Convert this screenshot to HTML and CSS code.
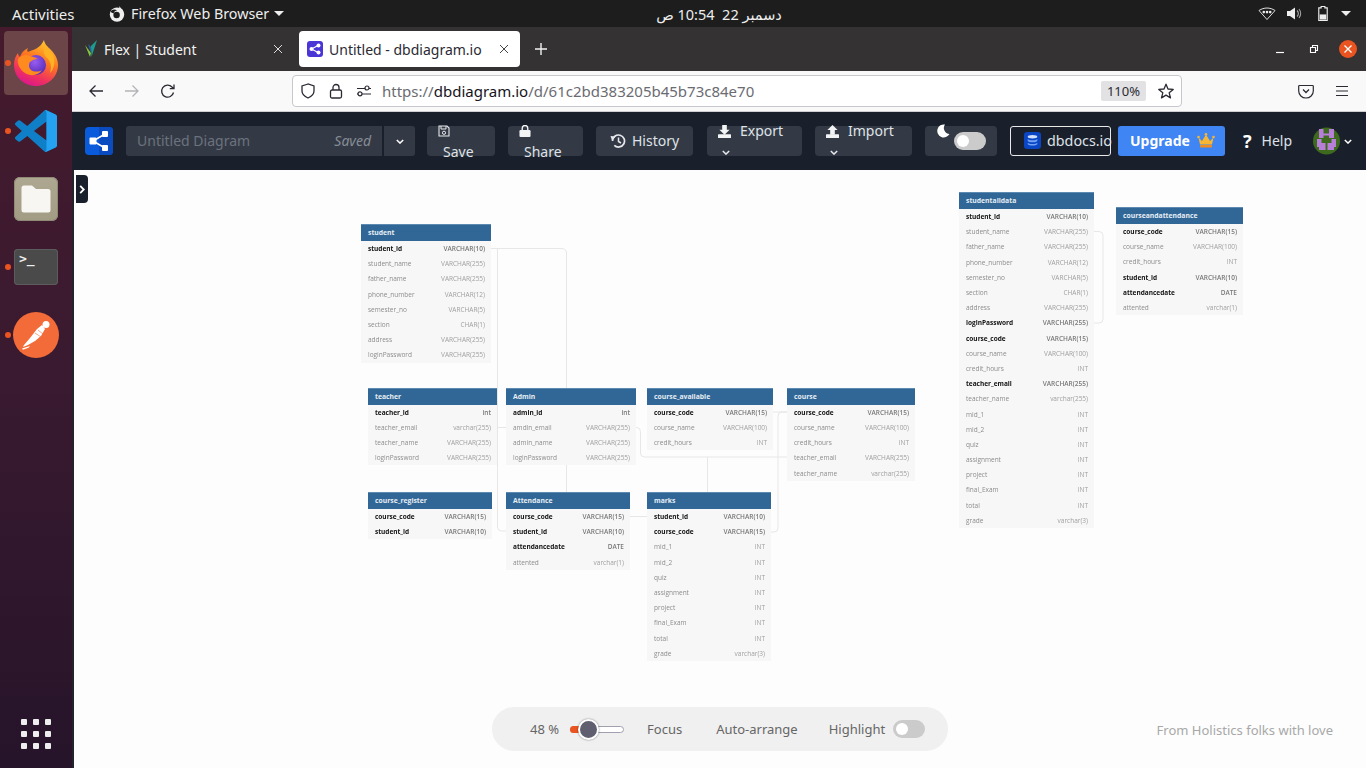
FILE: index.html
```html
<!DOCTYPE html>
<html lang="en">
<head>
<meta charset="utf-8">
<title>Untitled - dbdiagram.io</title>
<link rel="stylesheet" href="styles.css">
</head>
<body>
<header class="topbar">
  <div class="top-left">
    <span class="activities">Activities</span>
    <span class="app-menu">
      <svg class="ff-mono" viewBox="0 0 16 16"><circle cx="8" cy="8.6" r="7.2" fill="#eee"/><circle cx="7.6" cy="9" r="3.2" fill="#1d1d1d"/><path d="M1.5 6C3 3 6 3 8 4.5 6.5 4.6 5 5.5 4.6 7.5Z" fill="#1d1d1d"/><path d="M10.5 0c.4 2 3 3 4 5.5L10 4Z" fill="#eee"/></svg>
      Firefox Web Browser <i class="caret"></i>
    </span>
  </div>
  <div class="clock" dir="rtl">دسمبر 22&nbsp;&nbsp;10:54 ص</div>
  <div class="tray">
    <svg class="tray-i" viewBox="0 0 18 14"><path d="M1 4C6 .7 12 .7 17 4L9 13Z" fill="none" stroke="#ddd" stroke-width="1"/><circle cx="5.8" cy="5.6" r="1.3" fill="#eee"/><circle cx="9" cy="5.6" r="1.3" fill="#eee"/><circle cx="12.2" cy="5.6" r="1.3" fill="#eee"/></svg>
    <svg class="tray-i" viewBox="0 0 18 14"><path d="M1 4.500h3L9 1v12L4 9.500H1Z" fill="#eee"/><path d="M11 4a4 4 0 0 1 0 6M13 2.500a7 7 0 0 1 0 9" fill="none" stroke="#aaa" stroke-width="1.100"/></svg>
    <svg class="tray-i" viewBox="0 0 18 16"><path d="M7 .5h4v1.500h2.500v13.500h-9V2H7Z" fill="none" stroke="#eee" stroke-width="1.200"/><rect x="5.500" y="9" width="7" height="5.500" fill="#eee"/></svg>
    <i class="caret tray-caret"></i>
  </div>
</header>

<div class="desktop">
  <aside class="dock">
    <div class="dock-item tile-active">
      <i class="dot"></i>
      <svg class="ic-ff" viewBox="0 0 46 46">
        <defs>
          <linearGradient id="ffBody" x1=".75" y1="0" x2=".3" y2="1"><stop offset="0" stop-color="#ffd02e"/><stop offset=".4" stop-color="#ff7a1f"/><stop offset=".75" stop-color="#f0325e"/><stop offset="1" stop-color="#d9158f"/></linearGradient>
          <radialGradient id="ffCore" cx=".45" cy=".35" r=".7"><stop offset="0" stop-color="#9a5cf0"/><stop offset="1" stop-color="#4f2ab8"/></radialGradient>
        </defs>
        <path d="M31 0c.5 4 4 7 7 10 4 4 7 9 7 15 0 12-10 21-22 21S1 37 1 25c0-5 1.500-9 4-12 .2 2 1 3 2 4 1-4 4-7 8-9-1 2-1 3 0 4 4-2 12-3 16-12Z" fill="url(#ffBody)"/>
        <circle cx="23" cy="25" r="10" fill="url(#ffCore)"/>
        <path d="M5 19c3-4 8-5 12-3 4 1 6 2 8 3-4 0-5 1-8 3-1 1-2 5 1 8 3 2 8 2 11 0-3 5-11 7-17 3-5-3-8-9-7-14Z" fill="#ff8a1e"/>
        <path d="M31 3c1 5 8 8 10 15 1 5 0 11-4 15 2-6 1-12-4-16-2-2-3-8-2-14Z" fill="#ffb224"/>
      </svg>
    </div>
    <div class="dock-item">
      <i class="dot"></i>
      <svg class="ic-vs" viewBox="0 0 100 100"><path d="M96.500 10.800 75.900.9a6.200 6.200 0 0 0-7.100 1.200L29.300 38.100 12.100 25.100a4.200 4.200 0 0 0-5.300.2L1.400 30.300a4.200 4.200 0 0 0 0 6.200L16.300 50 1.400 63.500a4.200 4.200 0 0 0 0 6.200l5.500 5a4.200 4.200 0 0 0 5.300.2l17.100-13 39.500 36a6.200 6.200 0 0 0 7.100 1.200l20.600-9.900a6.200 6.200 0 0 0 3.500-5.600V16.400a6.200 6.200 0 0 0-3.500-5.600ZM75 72.700 45.100 50 75 27.300Z" fill="#0f80c8"/><path d="M71 99.300a6 6 0 0 0 4.900-.4l20.600-9.900a6.200 6.200 0 0 0 3.500-5.600V16.400a6.200 6.200 0 0 0-3.500-5.600L75.900.9A6 6 0 0 0 71 .7C73.500 2 75 4 75 7v86c0 3-1.500 5-4 6.300Z" fill="#25a3f2"/></svg>
    </div>
    <div class="dock-item">
      <div class="ic-files"><svg viewBox="0 0 32 28"><path d="M1.500 3a2.500 2.500 0 0 1 2.500-2.500h8l4 3.500h12a2.500 2.500 0 0 1 2.500 2.500V25a2.500 2.500 0 0 1-2.500 2.500H4A2.500 2.500 0 0 1 1.500 25Z" fill="#f8f6f2"/></svg></div>
    </div>
    <div class="dock-item">
      <i class="dot"></i>
      <div class="ic-term"><span>&gt;_</span></div>
    </div>
    <div class="dock-item">
      <i class="dot"></i>
      <svg class="ic-post" viewBox="0 0 46 46"><circle cx="23" cy="23" r="23" fill="#f26b38"/><g fill="#fff"><circle cx="33" cy="12.500" r="3.500"/><path d="M29 13 24 17l-7 9-6 7-1 2 5-2 7-4 6-5 4-7Z"/><path d="M9 36.500l8-2.500-1.500 1.800-5.500 2Z"/></g><path d="M22 21l6 4M25 18l5 4" stroke="#f26b38" stroke-width=".6"/></svg>
    </div>
    <div class="dock-grid">
      <i></i><i></i><i></i><i></i><i></i><i></i><i></i><i></i><i></i>
    </div>
  </aside>

  <main class="browser">
    <div class="tabbar">
      <div class="tab">
        <svg class="tab-ic" viewBox="0 0 12 18"><path d="M0 5l5 12 1-4Z" fill="#8ac43f"/><path d="M12 0 6 6l.5 11Z" fill="#1b9e8f"/><path d="M3 4l3 9V7Z" fill="#2f5fa8"/></svg>
        <span class="tab-title">Flex | Student</span>
        <span class="tab-x">
          <svg viewBox="0 0 10 10"><path d="M1 1l8 8M9 1l-8 8" stroke="#ddd" stroke-width="1"/></svg>
        </span>
      </div>
      <div class="tab tab-on">
        <svg class="tab-ic2" viewBox="0 0 16 16"><rect width="16" height="16" rx="3" fill="#4a35d6"/><path d="M4.500 8 11 4.500M4.500 8l6.500 3.500" stroke="#fff" stroke-width="1.200"/><circle cx="4.500" cy="8" r="2" fill="#fff"/><circle cx="11.500" cy="4.500" r="2" fill="#fff"/><circle cx="11.500" cy="11.500" r="2" fill="#fff"/></svg>
        <span class="tab-title">Untitled - dbdiagram.io</span>
        <span class="tab-x">
          <svg viewBox="0 0 10 10"><path d="M1 1l8 8M9 1l-8 8" stroke="#444" stroke-width="1"/></svg>
        </span>
      </div>
      <svg class="tab-plus" viewBox="0 0 14 14"><path d="M7 1v12M1 7h12" stroke="#f2f2f2" stroke-width="1.400"/></svg>
      <div class="win-ctl">
        <svg class="wc" viewBox="0 0 12 12"><path d="M2 9.500h8" stroke="#fff" stroke-width="1.200"/></svg>
        <svg class="wc wc-max" viewBox="0 0 12 12"><path d="M2.500 4.500h5v5h-5ZM4.500 4.500V2.500h5v5h-2" fill="none" stroke="#fff" stroke-width="1.100"/></svg>
        <span class="wc-close"><svg viewBox="0 0 10 10"><path d="M1.500 1.500l7 7M8.500 1.500l-7 7" stroke="#fff" stroke-width="1.300"/></svg></span>
      </div>
    </div>

    <nav class="navbar">
      <svg class="nav-ic back" viewBox="0 0 16 16"><path d="M15 8H2M7.500 2.500 2 8l5.500 5.500" fill="none" stroke="#2b2a33" stroke-width="1.300"/></svg>
      <svg class="nav-ic fwd" viewBox="0 0 16 16"><path d="M1 8h13M8.500 2.500 14 8l-5.500 5.500" fill="none" stroke="#b4b4b8" stroke-width="1.300"/></svg>
      <svg class="nav-ic reload" viewBox="0 0 16 16"><path d="M13.500 9.500A6 6 0 1 1 12 4l1.500 1.500M14 1.500v4.200H9.800" fill="none" stroke="#2b2a33" stroke-width="1.300"/></svg>
      <div class="urlbar">
        <svg class="url-ic" viewBox="0 0 16 16"><path d="M8 1 2 3v5c0 3 2.500 5.500 6 7 3.500-1.500 6-4 6-7V3Z" fill="none" stroke="#2b2a33" stroke-width="1.300"/></svg>
        <svg class="url-ic" viewBox="0 0 16 16"><rect x="2.500" y="7" width="11" height="8" rx="1.500" fill="none" stroke="#2b2a33" stroke-width="1.300"/><path d="M5 7V4.500a3 3 0 0 1 6 0V7" fill="none" stroke="#2b2a33" stroke-width="1.300"/></svg>
        <svg class="url-ic" viewBox="0 0 16 16"><path d="M1 5.500h8M1 11h14M13 5.500h2" stroke="#2b2a33" stroke-width="1.200"/><circle cx="11" cy="5" r="2" fill="none" stroke="#2b2a33" stroke-width="1.200"/><circle cx="4" cy="10.800" r="2" fill="#fff" stroke="#2b2a33" stroke-width="1.200"/></svg>
        <span class="url-text">https://<b>dbdiagram.io</b>/d/61c2bd383205b45b73c84e70</span>
        <span class="zoom-badge">110%</span>
        <svg class="url-star" viewBox="0 0 16 16"><path d="M8 1.200 10 6l5.200.4-4 3.400 1.300 5.100L8 12.100l-4.500 2.800 1.300-5.100-4-3.400L6 6Z" fill="none" stroke="#2b2a33" stroke-width="1.300" stroke-linejoin="round"/></svg>
      </div>
      <svg class="nav-ic pocket" viewBox="0 0 16 16"><path d="M1.500 2.500h13a.8.8 0 0 1 .8.8V8a7.300 7 0 0 1-14.600 0V3.300a.8.8 0 0 1 .8-.8Z" fill="none" stroke="#2b2a33" stroke-width="1.200"/><path d="M5 6.500 8 9.500l3-3" fill="none" stroke="#2b2a33" stroke-width="1.300"/></svg>
      <svg class="nav-ic burger" viewBox="0 0 16 16"><path d="M2 3.500h12M2 8h12M2 12.500h12" stroke="#2b2a33" stroke-width="1.200"/></svg>
    </nav>

    <div class="appbar">
      <svg class="logo" viewBox="0 0 28 28"><rect width="28" height="28" rx="4" fill="#0a5bdc"/><path d="M14 0h10a4 4 0 0 1 4 4v20a4 4 0 0 1-4 4H14Z" fill="#0a4cc0"/><path d="M8 14 20 7M8 14l12 7" stroke="#fff" stroke-width="1.500"/><rect x="4.500" y="10.500" width="7" height="7" rx="1" fill="#fff"/><rect x="17" y="4" width="6" height="6" rx="1" fill="#fff"/><rect x="17" y="18" width="6" height="6" rx="1" fill="#fff"/></svg>
      <div class="title-box"><span class="title-ph">Untitled Diagram</span><em class="saved">Saved</em></div>
      <div class="title-drop"><svg class="chev" viewBox="0 0 10 6"><path d="M1 1l4 4 4-4" fill="none" stroke="#fff" stroke-width="1.800"/></svg></div>

      <div class="btn btn-save">
        <svg class="b-ic" viewBox="0 0 12 12"><path d="M1 1h8l2 2v8H1Z" fill="none" stroke="#e6e8ec" stroke-width="1.100"/><path d="M3 1v3h5V1" fill="none" stroke="#e6e8ec"/><circle cx="6" cy="7.800" r="1.600" fill="none" stroke="#e6e8ec"/></svg>
        <span class="b-low">Save</span>
      </div>
      <div class="btn btn-share">
        <svg class="b-ic" viewBox="0 0 12 13"><rect y="5.500" width="12" height="7.500" rx="1.200" fill="#f2f3f5"/><path d="M3 6V3.500a3 3 0 0 1 6 0V6" fill="none" stroke="#f2f3f5" stroke-width="1.500"/></svg>
        <span class="b-low">Share</span>
      </div>
      <div class="btn btn-hist">
        <svg class="h-ic" viewBox="0 0 16 16"><path d="M2.500 8a6 6 0 1 1 1.800 4.300" fill="none" stroke="#e6e8ec" stroke-width="1.700"/><path d="M.5 3l5 .5-3.500 4Z" fill="#e6e8ec"/><path d="M8.500 4.500V8.500l2.500 1.500" fill="none" stroke="#e6e8ec" stroke-width="1.500"/></svg>
        History
      </div>
      <div class="btn btn-export">
        <span class="b-top"><svg class="d-ic" viewBox="0 0 14 14"><path d="M4.500 0h5v5h3L7 10.500 1.500 5h3Z" fill="#f2f3f5"/><rect y="10" width="14" height="4" rx=".6" fill="#f2f3f5"/></svg>Export</span>
        <svg class="chev c-low" viewBox="0 0 10 6"><path d="M1 1l4 4 4-4" fill="none" stroke="#e6e8ec" stroke-width="1.800"/></svg>
      </div>
      <div class="btn btn-import">
        <span class="b-top"><svg class="d-ic" viewBox="0 0 14 14"><path d="M4.500 10.500h5v-5h3L7 0 1.500 5.500h3Z" fill="#f2f3f5"/><rect y="10" width="14" height="4" rx=".6" fill="#f2f3f5"/></svg>Import</span>
        <svg class="chev c-low" viewBox="0 0 10 6"><path d="M1 1l4 4 4-4" fill="none" stroke="#e6e8ec" stroke-width="1.800"/></svg>
      </div>
      <div class="btn btn-moon">
        <svg class="moon" viewBox="0 0 14 14"><path d="M9 .5A6.500 6.500 0 1 0 13.500 10 6 6 0 0 1 9 .5Z" fill="#fff"/></svg>
        <span class="toggle toggle-head"><i></i></span>
      </div>
      <div class="btn-docs">
        <svg class="db-ic" viewBox="0 0 16 16"><rect width="16" height="16" rx="3" fill="#0a46c4"/><ellipse cx="8" cy="4.500" rx="4.500" ry="1.600" fill="#cfe0ff"/><path d="M3.500 6.500c1 1.600 8 1.600 9 0v2c-1 1.600-8 1.600-9 0ZM3.500 10c1 1.600 8 1.600 9 0v1.500c-1 1.600-8 1.600-9 0Z" fill="#6fa1f5"/></svg>
        <span>dbdocs.io</span>
      </div>
      <div class="btn-up">Upgrade
        <svg class="crown" viewBox="0 0 18 15"><path d="M1.500 4.500 5 8l4-6.500L13 8l3.500-3.500L15 11.500H3Z" fill="#f7b733"/><rect x="3" y="12" width="12" height="2.500" rx=".8" fill="#f08c1e"/><circle cx="1.500" cy="4" r="1.300" fill="#f7b733"/><circle cx="9" cy="1.300" r="1.300" fill="#f7b733"/><circle cx="16.500" cy="4" r="1.300" fill="#f7b733"/></svg>
      </div>
      <div class="help"><b>?</b><span>Help</span></div>
      <svg class="avatar" viewBox="0 0 27 28"><circle cx="13.500" cy="14" r="13.500" fill="#3e6a1e"/><path d="M6 2h4.500v4.500h5.500V2H21v9h-5V8.500h-5.500V11H6ZM4 12h4.500v4h4v7H6v-3H4ZM18.500 12H23v8h-2v3h-6.500v-7h4Z" fill="#b77fd8"/></svg>
      <svg class="chev av-chev" viewBox="0 0 10 6"><path d="M1 1l4 4 4-4" fill="none" stroke="#fff" stroke-width="1.800"/></svg>
    </div>

    <section class="canvas">
      <div class="side-toggle"><svg viewBox="0 0 6 10"><path d="M1 1l4 4-4 4" fill="none" stroke="#fff" stroke-width="2"/></svg></div>

      <svg class="links" viewBox="74 170 1292 598" fill="none" stroke="#e7e7e7" stroke-width="1">
        <path d="M491 248.500H562a4.500 4.500 0 0 1 4.500 4.500V492"/>
        <path d="M497.500 248.500V527a4 4 0 0 0 4 4H506"/>
        <path d="M497 427.500h9"/>
        <path d="M636 427.500h.5a4 4 0 0 1 4 4V453a4 4 0 0 0 4 4H787"/>
        <path d="M773 412h14"/>
        <path d="M787 412h-5a4 4 0 0 0-4 4V528a4 4 0 0 1-4 4h-3"/>
        <path d="M707.500 457v35"/>
        <path d="M630 516.500h17"/>
        <path d="M1094 231.500h5a4 4 0 0 1 4 4V319a4 4 0 0 1-4 4h-5"/>
      </svg>

      <article class="tbl t-student">
        <h4>student</h4>
        <div class="row pk"><span>student_id</span><span>VARCHAR(10)</span></div>
        <div class="row"><span>student_name</span><span>VARCHAR(255)</span></div>
        <div class="row"><span>father_name</span><span>VARCHAR(255)</span></div>
        <div class="row"><span>phone_number</span><span>VARCHAR(12)</span></div>
        <div class="row"><span>semester_no</span><span>VARCHAR(5)</span></div>
        <div class="row"><span>section</span><span>CHAR(1)</span></div>
        <div class="row"><span>address</span><span>VARCHAR(255)</span></div>
        <div class="row"><span>loginPassword</span><span>VARCHAR(255)</span></div>
      </article>

      <article class="tbl t-teacher">
        <h4>teacher</h4>
        <div class="row pk"><span>teacher_id</span><span>int</span></div>
        <div class="row"><span>teacher_email</span><span>varchar(255)</span></div>
        <div class="row"><span>teacher_name</span><span>VARCHAR(255)</span></div>
        <div class="row"><span>loginPassword</span><span>VARCHAR(255)</span></div>
      </article>

      <article class="tbl t-admin">
        <h4>Admin</h4>
        <div class="row pk"><span>admin_id</span><span>int</span></div>
        <div class="row"><span>amdin_email</span><span>VARCHAR(255)</span></div>
        <div class="row"><span>admin_name</span><span>VARCHAR(255)</span></div>
        <div class="row"><span>loginPassword</span><span>VARCHAR(255)</span></div>
      </article>

      <article class="tbl t-avail">
        <h4>course_available</h4>
        <div class="row pk"><span>course_code</span><span>VARCHAR(15)</span></div>
        <div class="row"><span>course_name</span><span>VARCHAR(100)</span></div>
        <div class="row"><span>credit_hours</span><span>INT</span></div>
      </article>

      <article class="tbl t-course">
        <h4>course</h4>
        <div class="row pk"><span>course_code</span><span>VARCHAR(15)</span></div>
        <div class="row"><span>course_name</span><span>VARCHAR(100)</span></div>
        <div class="row"><span>credit_hours</span><span>INT</span></div>
        <div class="row"><span>teacher_email</span><span>VARCHAR(255)</span></div>
        <div class="row"><span>teacher_name</span><span>varchar(255)</span></div>
      </article>

      <article class="tbl t-reg">
        <h4>course_register</h4>
        <div class="row pk"><span>course_code</span><span>VARCHAR(15)</span></div>
        <div class="row pk"><span>student_id</span><span>VARCHAR(10)</span></div>
      </article>

      <article class="tbl t-att">
        <h4>Attendance</h4>
        <div class="row pk"><span>course_code</span><span>VARCHAR(15)</span></div>
        <div class="row pk"><span>student_id</span><span>VARCHAR(10)</span></div>
        <div class="row pk"><span>attendancedate</span><span>DATE</span></div>
        <div class="row"><span>attented</span><span>varchar(1)</span></div>
      </article>

      <article class="tbl t-marks">
        <h4>marks</h4>
        <div class="row pk"><span>student_id</span><span>VARCHAR(10)</span></div>
        <div class="row pk"><span>course_code</span><span>VARCHAR(15)</span></div>
        <div class="row"><span>mid_1</span><span>INT</span></div>
        <div class="row"><span>mid_2</span><span>INT</span></div>
        <div class="row"><span>quiz</span><span>INT</span></div>
        <div class="row"><span>assignment</span><span>INT</span></div>
        <div class="row"><span>project</span><span>INT</span></div>
        <div class="row"><span>final_Exam</span><span>INT</span></div>
        <div class="row"><span>total</span><span>INT</span></div>
        <div class="row"><span>grade</span><span>varchar(3)</span></div>
      </article>

      <article class="tbl t-all">
        <h4>studentalldata</h4>
        <div class="row pk"><span>student_id</span><span>VARCHAR(10)</span></div>
        <div class="row"><span>student_name</span><span>VARCHAR(255)</span></div>
        <div class="row"><span>father_name</span><span>VARCHAR(255)</span></div>
        <div class="row"><span>phone_number</span><span>VARCHAR(12)</span></div>
        <div class="row"><span>semester_no</span><span>VARCHAR(5)</span></div>
        <div class="row"><span>section</span><span>CHAR(1)</span></div>
        <div class="row"><span>address</span><span>VARCHAR(255)</span></div>
        <div class="row pk"><span>loginPassword</span><span>VARCHAR(255)</span></div>
        <div class="row pk"><span>course_code</span><span>VARCHAR(15)</span></div>
        <div class="row"><span>course_name</span><span>VARCHAR(100)</span></div>
        <div class="row"><span>credit_hours</span><span>INT</span></div>
        <div class="row pk"><span>teacher_email</span><span>VARCHAR(255)</span></div>
        <div class="row"><span>teacher_name</span><span>varchar(255)</span></div>
        <div class="row"><span>mid_1</span><span>INT</span></div>
        <div class="row"><span>mid_2</span><span>INT</span></div>
        <div class="row"><span>quiz</span><span>INT</span></div>
        <div class="row"><span>assignment</span><span>INT</span></div>
        <div class="row"><span>project</span><span>INT</span></div>
        <div class="row"><span>final_Exam</span><span>INT</span></div>
        <div class="row"><span>total</span><span>INT</span></div>
        <div class="row"><span>grade</span><span>varchar(3)</span></div>
      </article>

      <article class="tbl t-ca">
        <h4>courseandattendance</h4>
        <div class="row pk"><span>course_code</span><span>VARCHAR(15)</span></div>
        <div class="row"><span>course_name</span><span>VARCHAR(100)</span></div>
        <div class="row"><span>credit_hours</span><span>INT</span></div>
        <div class="row pk"><span>student_id</span><span>VARCHAR(10)</span></div>
        <div class="row pk"><span>attendancedate</span><span>DATE</span></div>
        <div class="row"><span>attented</span><span>varchar(1)</span></div>
      </article>

      <div class="zoombar">
        <span class="z-pct">48 %</span>
        <span class="slider"><i class="s-fill"></i><i class="s-thumb"></i></span>
        <span class="z-focus">Focus</span>
        <span class="z-auto">Auto-arrange</span>
        <span class="z-high">Highlight</span>
        <span class="toggle"><i></i></span>
      </div>
      <div class="love">From Holistics folks with love</div>
    </section>
  </main>
</div>
</body>
</html>
```

FILE: styles.css
```css
* { box-sizing: border-box; }
html, body { margin: 0; height: 100%; overflow: hidden; }
body { font-family: "Noto Sans", "Open Sans", "DejaVu Sans", sans-serif; width: 1366px; height: 768px; background: #1d1d1d; }
svg { display: block; flex: none; }

/* GNOME top bar */
.topbar { height: 27px; background: #1d1d1d; color: #eee; font-size: 14.3px; display: flex; align-items: center; position: relative; }
.top-left { display: flex; align-items: center; padding-left: 12px; }
.activities { width: 97px; font-size: 15px; }
.app-menu { display: flex; align-items: center; }
.ff-mono { width: 16px; height: 16px; margin-right: 6px; }
.caret { display: inline-block; margin-left: 5px; border: 5px solid transparent; border-top: 5px solid #eee; border-bottom: 0; }
.clock { position: absolute; left: 656px; width: 126px; text-align: center; font-size: 14.5px; white-space: nowrap; }
.tray { margin-left: auto; display: flex; align-items: center; gap: 10px; padding-right: 15px; }
.tray-i { width: 18px; height: 15px; }
.tray-caret { margin-left: -1px; }

.desktop { display: flex; height: 741px; }

/* Dock */
.dock { width: 72px; flex: none; background: linear-gradient(180deg, #451a2c 0%, #3a1a30 45%, #26142a 100%); display: flex; flex-direction: column; align-items: center; padding-top: 4px; }
.dock-item { position: relative; width: 64px; height: 64px; display: flex; align-items: center; justify-content: center; margin-bottom: 4px; }
.tile-active { background: #6b4548; border-radius: 4px; }
.dot { position: absolute; left: 1px; top: 29px; width: 6px; height: 6px; border-radius: 50%; background: #e95420; }
.ic-ff { width: 46px; height: 46px; }
.ic-vs { width: 42px; height: 42px; }
.ic-files { width: 44px; height: 44px; border-radius: 6px; background: linear-gradient(#aea791, #a39c85); display: flex; align-items: center; justify-content: center; box-shadow: 0 0 0 1px #8f8a78 inset; }
.ic-files svg { width: 32px; height: 28px; }
.ic-term { width: 44px; height: 36px; border-radius: 4px; background: #4a4a4a; box-shadow: 0 0 0 1px #5c5c5c inset; color: #eee; font: 700 13px/14px "DejaVu Sans Mono", monospace; padding: 3px 0 0 5px; }
.ic-post { width: 46px; height: 46px; }
.dock-grid { margin-top: auto; margin-bottom: 19px; display: grid; grid-template-columns: repeat(3, 6px); gap: 6px; }
.dock-grid i { width: 6px; height: 6px; background: #eee; border-radius: 1px; }

/* Browser */
.browser { width: 1294px; display: flex; flex-direction: column; min-width: 0; }
.tabbar { height: 44px; background: #343232; display: flex; align-items: center; padding-left: 0; }
.tab { height: 36px; width: 227px; display: flex; align-items: center; padding: 0 13px 0 13px; color: #f2f2f2; font-size: 14px; border-radius: 4px; }
.tab-on { width: 221px; background: #fff; color: #2b2a33; padding: 0 8px; }
.tab-ic { width: 12px; height: 18px; margin-right: 7px; }
.tab-ic2 { width: 16px; height: 16px; margin-right: 6px; }
.tab-title { flex: 1; white-space: nowrap; }
.tab-x { width: 10px; height: 10px; margin-right: 3px; }
.tab-plus { width: 14px; height: 14px; margin-left: 14px; }
.win-ctl { margin-left: auto; display: flex; align-items: center; padding-right: 9px; }
.wc { width: 12px; height: 12px; margin-right: 22px; }
.wc-max { margin-right: 19px; }
.wc-close { width: 18px; height: 18px; border-radius: 50%; background: #e95420; display: flex; align-items: center; justify-content: center; }
.wc-close svg { width: 10px; height: 10px; }

.navbar { height: 41px; background: #f9f9fa; border-bottom: 1px solid #cfcfd3; display: flex; align-items: center; padding: 0 16px 1px 16px; }
.nav-ic { width: 16px; height: 16px; }
.fwd, .reload { margin-left: 20px; }
.urlbar { width: 890px; height: 32px; margin-left: 116px; background: #fff; border: 1px solid #c8c8cc; border-radius: 4px; display: flex; align-items: center; padding-left: 7px; }
.url-ic { width: 16px; height: 16px; margin-right: 12px; }
.url-text { font-size: 15px; color: #6b6b72; margin-left: -2px; flex: 1; white-space: nowrap; }
.url-text b { color: #15141a; font-weight: 400; }
.zoom-badge { width: 45px; height: 20px; border-radius: 2px; background: #e2e2e4; font-size: 13px; color: #2b2a33; text-align: center; line-height: 20px; margin-right: 12px; }
.url-star { width: 16px; height: 16px; margin-right: 7px; }
.pocket { margin-left: 116px; }
.burger { margin-left: 20px; }

/* App bar */
.appbar { height: 58px; background: #1a202b; display: flex; align-items: center; color: #dfe2e8; font-size: 14px; padding-left: 13px; }
.logo { width: 28px; height: 28px; }
.title-box { width: 256px; height: 30px; margin-left: 13px; background: #343a45; border-radius: 3px 0 0 3px; display: flex; align-items: center; justify-content: space-between; padding: 0 11px 2px; font-size: 14px; color: #6b727e; }
.saved { font-size: 14px; color: #868c96; }
.title-drop { width: 31px; height: 30px; margin-left: 2px; background: #343a45; border-radius: 0 3px 3px 0; display: flex; align-items: center; justify-content: center; }
.chev { width: 8px; height: 5px; }
.btn { height: 30px; background: #343a45; border-radius: 4px; position: relative; flex: none; }
.btn-save { width: 68px; margin-left: 12px; }
.btn-share { width: 75px; margin-left: 13px; }
.btn-hist { width: 97px; margin-left: 13px; display: flex; align-items: center; padding: 0 0 1px 14px; gap: 6px; }
.btn-export { width: 95px; margin-left: 14px; }
.btn-import { width: 97px; margin-left: 13px; }
.btn-moon { width: 72px; margin-left: 13px; }
.b-ic { position: absolute; left: 11px; top: -1px; width: 12px; height: 12px; }
.b-low { position: absolute; left: 16px; top: 16px; line-height: 20px; }
.h-ic { width: 16px; height: 16px; }
.b-top { position: absolute; left: 11px; top: -5px; display: flex; align-items: center; line-height: 20px; gap: 9px; }
.d-ic { width: 13px; height: 13px; }
.c-low { position: absolute; left: 15px; top: 24px; }
.moon { position: absolute; left: 11px; top: -2px; width: 14px; height: 14px; }
.toggle { width: 32px; height: 18px; border-radius: 9px; background: #cbcbcb; display: block; position: relative; flex: none; }
.toggle i { position: absolute; left: 3px; top: 3px; width: 12px; height: 12px; border-radius: 50%; background: #fff; }
.toggle-head { position: absolute; left: 29px; top: 6px; }
.btn-docs { width: 101px; height: 30px; margin-left: 13px; border: 1px solid #e9e9e9; border-radius: 3px; display: flex; align-items: center; padding: 0 0 1px 13px; gap: 6px; white-space: nowrap; flex: none; font-size: 14.3px; }
.db-ic { width: 17px; height: 17px; }
.btn-up { width: 107px; height: 30px; margin-left: 7px; background: #3f85f4; border-radius: 3px; color: #fff; font-weight: 700; display: flex; align-items: center; padding: 0 0 1px 12px; gap: 7px; flex: none; }
.crown { width: 18px; height: 15px; }
.help { display: flex; align-items: center; margin-left: 18px; gap: 10px; padding-bottom: 1px; }
.help b { color: #fff; font-size: 18px; line-height: 20px; }
.avatar { width: 27px; height: 28px; margin-left: 21px; }
.av-chev { margin-left: 4px; }

/* Canvas */
.canvas { flex: 1; position: relative; background: #fdfdfd; border-left: 2px solid #23232b; overflow: hidden; }
.side-toggle { position: absolute; left: 2px; top: 5px; width: 12px; height: 28px; background: #1a202b; border-radius: 0 4px 4px 0; display: flex; align-items: center; justify-content: center; }
.side-toggle svg { width: 6px; height: 9px; }
.links { position: absolute; left: 0; top: 0; width: 1292px; height: 598px; }

.tbl { position: absolute; background: #f7f7f7; font-size: 6.5px; font-family: "Open Sans", "Noto Sans", sans-serif; }
.tbl h4 { margin: 0; height: 17px; background: #316796; border-top: 1px solid #5c8ab0; color: #e6eef5; font-size: 6.8px; font-weight: 700; line-height: 15.4px; padding: 0 7px; }
.row { height: 15.2px; display: flex; justify-content: space-between; align-items: center; padding: 0 6px 0 7px; color: #8c8c8c; white-space: nowrap; filter: blur(.2px); }
.row span:last-child { color: #a0a0a0; }
.pk { color: #111; font-weight: 700; }
.pk span:last-child { color: #787878; font-weight: 600; }
.t-student { left: 287px; top: 54px; width: 130px; }
.t-teacher { left: 294px; top: 217.7px; width: 129px; }
.t-admin { left: 432px; top: 217.7px; width: 130px; }
.t-avail { left: 573px; top: 217.7px; width: 126px; }
.t-course { left: 713px; top: 217.7px; width: 128px; }
.t-reg { left: 294px; top: 322px; width: 124px; }
.t-att { left: 432px; top: 322px; width: 124px; }
.t-marks { left: 573px; top: 322px; width: 124px; }
.t-all { left: 885px; top: 22px; width: 135px; }
.t-ca { left: 1042px; top: 37px; width: 127px; }

/* Bottom bar */
.zoombar { position: absolute; left: 418px; top: 537px; width: 456px; height: 44px; border-radius: 22px; background: #f0f0f0; display: flex; align-items: center; padding-left: 38px; color: #666; font-size: 13px; }
.slider { width: 54px; height: 7px; margin-left: 11px; border: 1px solid #a0a0b0; border-radius: 4px; position: relative; background: #fff; }
.s-fill { position: absolute; left: -1px; top: -1px; width: 12px; height: 7px; background: #e95420; border-radius: 4px 0 0 4px; }
.s-thumb { position: absolute; left: 7px; top: -8px; width: 21px; height: 21px; border-radius: 50%; background: #5f5f70; border: 2px solid #fff; box-shadow: 0 0 2px rgba(0,0,0,.5); }
.z-focus { margin-left: 23px; }
.z-auto { margin-left: 34px; }
.z-high { margin-left: 31px; }
.zoombar .toggle { margin-left: 8px; }
.love { position: absolute; right: 33px; top: 551px; font-size: 13px; color: #a8a8a8; }
```
